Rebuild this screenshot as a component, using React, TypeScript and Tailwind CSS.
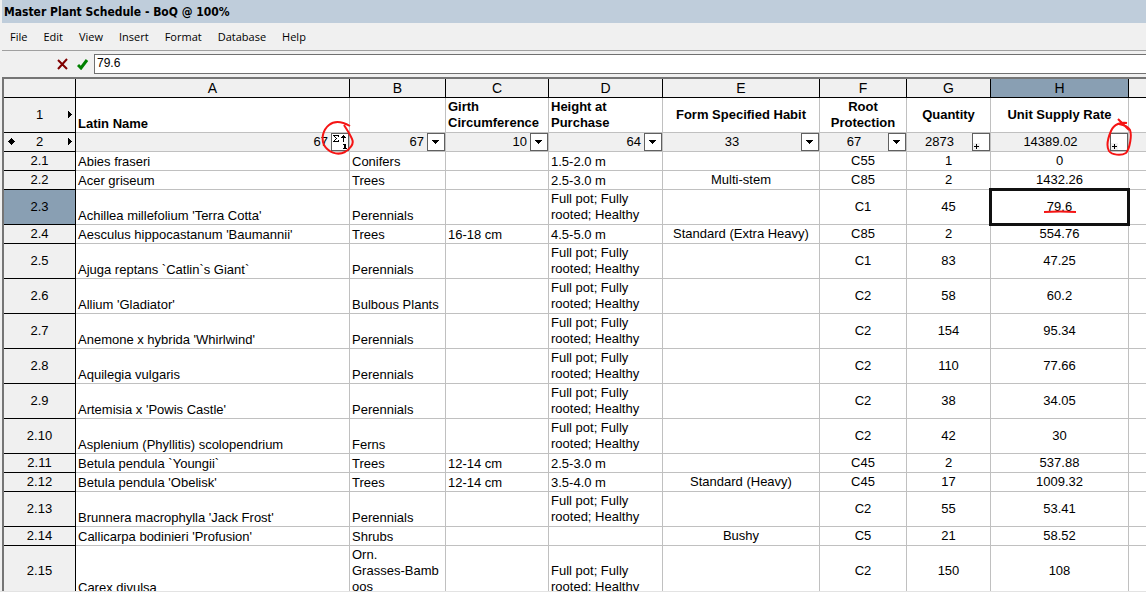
type Align = "left" | "center";

type Column = {
  letter: string;
  width: string;
  title: string;
  total: string;
  control: "sort" | "menu" | "sum";
  align: Align;
};

type Row = {
  id: string;
  size: string;
  cells: string[];
};

const SMALL = "h-[19px]";
const TALL = "h-[35px]";
const GRADE = "Full pot; Fully\nrooted; Healthy";

const MENUS = ["File", "Edit", "View", "Insert", "Format", "Database", "Help"];

const COLUMNS: Column[] = [
  { letter: "A", width: "w-[274px]", title: "Latin Name", total: "67", control: "sort", align: "left" },
  { letter: "B", width: "w-[96px]", title: "", total: "67", control: "menu", align: "left" },
  { letter: "C", width: "w-[103px]", title: "Girth\nCircumference", total: "10", control: "menu", align: "left" },
  { letter: "D", width: "w-[114px]", title: "Height at\nPurchase", total: "64", control: "menu", align: "left" },
  { letter: "E", width: "w-[157px]", title: "Form Specified Habit", total: "33", control: "menu", align: "center" },
  { letter: "F", width: "w-[87px]", title: "Root\nProtection", total: "67", control: "menu", align: "center" },
  { letter: "G", width: "w-[84px]", title: "Quantity", total: "2873", control: "sum", align: "center" },
  { letter: "H", width: "w-[138px]", title: "Unit Supply Rate", total: "14389.02", control: "sum", align: "center" },
];

const ROWS: Row[] = [
  { id: "2.1", size: SMALL, cells: ["Abies fraseri", "Conifers", "", "1.5-2.0 m", "", "C55", "1", "0"] },
  { id: "2.2", size: SMALL, cells: ["Acer griseum", "Trees", "", "2.5-3.0 m", "Multi-stem", "C85", "2", "1432.26"] },
  { id: "2.3", size: TALL, cells: ["Achillea millefolium 'Terra Cotta'", "Perennials", "", GRADE, "", "C1", "45", "79.6"] },
  { id: "2.4", size: SMALL, cells: ["Aesculus hippocastanum 'Baumannii'", "Trees", "16-18 cm", "4.5-5.0 m", "Standard (Extra Heavy)", "C85", "2", "554.76"] },
  { id: "2.5", size: TALL, cells: ["Ajuga reptans `Catlin`s Giant`", "Perennials", "", GRADE, "", "C1", "83", "47.25"] },
  { id: "2.6", size: TALL, cells: ["Allium 'Gladiator'", "Bulbous Plants", "", GRADE, "", "C2", "58", "60.2"] },
  { id: "2.7", size: TALL, cells: ["Anemone x hybrida 'Whirlwind'", "Perennials", "", GRADE, "", "C2", "154", "95.34"] },
  { id: "2.8", size: TALL, cells: ["Aquilegia vulgaris", "Perennials", "", GRADE, "", "C2", "110", "77.66"] },
  { id: "2.9", size: TALL, cells: ["Artemisia x 'Powis Castle'", "Perennials", "", GRADE, "", "C2", "38", "34.05"] },
  { id: "2.10", size: TALL, cells: ["Asplenium (Phyllitis) scolopendrium", "Ferns", "", GRADE, "", "C2", "42", "30"] },
  { id: "2.11", size: SMALL, cells: ["Betula pendula `Youngii`", "Trees", "12-14 cm", "2.5-3.0 m", "", "C45", "2", "537.88"] },
  { id: "2.12", size: SMALL, cells: ["Betula pendula 'Obelisk'", "Trees", "12-14 cm", "3.5-4.0 m", "Standard (Heavy)", "C45", "17", "1009.32"] },
  { id: "2.13", size: TALL, cells: ["Brunnera macrophylla 'Jack Frost'", "Perennials", "", GRADE, "", "C2", "55", "53.41"] },
  { id: "2.14", size: SMALL, cells: ["Callicarpa bodinieri 'Profusion'", "Shrubs", "", "", "Bushy", "C5", "21", "58.52"] },
  { id: "2.15", size: "h-[51px]", cells: ["Carex divulsa", "Orn.\nGrasses-Bamb\noos", "", GRADE, "", "C2", "150", "108"] },
];

const ACTIVE_ROW = "2.3";
const ACTIVE_COLUMN = "H";

function cellLayout(align: Align, text: string) {
  const side = align === "left" ? "px-[2px] text-left align-bottom" : "px-0 text-center align-middle";
  return `${side} ${text.includes("\n") ? "pt-0 pb-px" : "py-0"}`;
}

function ControlIcon({ control }: { control: Column["control"] }) {
  return (
    <svg width="16" height="16" viewBox="0 0 16 16" shapeRendering="crispEdges" aria-hidden="true">
      {control === "menu" && <path d="M4 6h7v1H4zM5 7h5v1H5zM6 8h3v1H6zM7 9h1v1H7z" />}
      {control === "sum" && (
        <>
          <path d="M0 9h7v7H0z" fill="#f0f0f0" />
          <path d="M3 10h1v2h2v1H4v2H3v-2H1v-1h2z" />
        </>
      )}
      {control === "sort" && (
        <>
          <path d="M1 1h6v2H6V2H3v1h1v1h1v1H4v1H3v1h3V6h1v2H1V7h1V6h1V5h1V4H3V3H2V2H1z" />
          <path d="M11 1h1v1h1v1h1v1h-2v4h-1V4H9V3h1V2h1z" />
          <path d="M13 10h1v4h1v1h-4v-1h1v-3h-1v-1h1z" />
        </>
      )}
    </svg>
  );
}

function MarkArrow() {
  return (
    <svg className="absolute top-1/2 right-[2px] -mt-1" width="5" height="7" viewBox="0 0 5 7" shapeRendering="crispEdges" aria-hidden="true">
      <path d="M0 0h1v1h1v1h1v1h1v1H3v1H2v1H1v1H0z" />
    </svg>
  );
}

// red pen circle round the sort button
function SortCircle() {
  return (
    <svg className="pointer-events-none absolute -top-[14px] -right-[6px]" width="34" height="40" viewBox="0 0 34 40" fill="none" aria-hidden="true">
      <path
        d="M29 7C22 3 14 1 8 6C2 11 0 19 3 26C7 33 16 37 24 33C30 29 33 24 31 20C29 15 26 11 23 6"
        stroke="#f51414"
        strokeWidth="2"
      />
    </svg>
  );
}

function SumCircle() {
  return (
    <svg className="pointer-events-none absolute -top-[15px] -right-[4px]" width="26" height="40" viewBox="0 0 26 40" fill="none" aria-hidden="true">
      <path
        d="M12 1L23 12M21 5C15 4 8 6 5 13C2 20 0 28 3 33C6 37 15 38 20 35C24 30 26 17 24 12C22 8 18 7 13 6"
        stroke="#f51414"
        strokeWidth="2"
      />
    </svg>
  );
}

export default function App() {
  return (
    <main className="flex h-screen flex-col overflow-hidden bg-[#f0f0f0] pl-[2px] text-black">
      <h1 className="h-[23px] shrink-0 bg-[#bfcddb] pl-[2px] font-['DejaVu_Sans_Condensed','DejaVu_Sans',sans-serif] text-[12px] leading-6 font-bold">
        Master Plant Schedule - BoQ @ 100%
      </h1>

      <nav className="flex h-[27px] shrink-0 items-center gap-4 pl-2 font-['Open_Sans',sans-serif] text-[11px] leading-4">
        {MENUS.map((menu) => (
          <button key={menu} type="button">
            {menu}
          </button>
        ))}
      </nav>

      {/* Formula bar */}
      <div className="flex h-[27px] shrink-0 items-center gap-2 border-t border-[#a0a0a0] pl-[55px]">
        <button type="button" aria-label="Cancel">
          <svg width="12" height="12" viewBox="0 0 12 12" fill="none" stroke="#800000" strokeWidth="2" aria-hidden="true">
            <path d="M1 2L10 11M10 1L1 11" />
          </svg>
        </button>
        <div className="flex min-w-0 flex-1 items-center gap-1">
          <button type="button" aria-label="Accept">
            <svg width="13" height="12" viewBox="0 0 13 12" fill="none" stroke="#008000" strokeWidth="2" aria-hidden="true">
              <path d="M1 7L4 10L10 2" strokeWidth="3" />
            </svg>
          </button>
          <input
            aria-label="Cell value"
            defaultValue="79.6"
            className="h-5 min-w-0 flex-1 border border-r-0 border-[#707070] bg-white px-[2px] pb-[2px] font-['Liberation_Sans',Arial,sans-serif] text-[12px] outline-none"
          />
        </div>
      </div>

      {/* Grid */}
      <div className="min-h-0 flex-1 overflow-hidden border-t-2 border-l-2 border-[#757575] bg-white">
        <table className="w-full min-w-[1142px] table-fixed border-separate border-spacing-0 font-['Liberation_Sans',Arial,sans-serif] text-[13px] leading-4">
          <colgroup>
            <col className="w-[72px]" />
            {COLUMNS.map((column) => (
              <col key={column.letter} className={column.width} />
            ))}
            <col />
          </colgroup>
          <thead>
            <tr className="h-[19px] bg-[#f0f0f0]">
              <td className="border-r border-b border-black p-0" />
              {COLUMNS.map((column) => (
                <th
                  key={column.letter}
                  scope="col"
                  className={`border-r border-b border-black p-0 text-[14px] font-normal ${
                    column.letter === ACTIVE_COLUMN ? "bg-[#899fb3]" : ""
                  }`}
                >
                  {column.letter}
                </th>
              ))}
              <td className="border-b border-black p-0" />
            </tr>
          </thead>
          <tbody>
            <tr className="h-[35px]">
              <th scope="row" className="relative border-r border-b border-black bg-[#f0f0f0] p-0 font-normal">
                1
                <MarkArrow />
              </th>
              {COLUMNS.map((column) => (
                <th
                  key={column.letter}
                  className={`border-r border-b border-[#c0c0c0] font-bold whitespace-pre-line ${cellLayout(column.align, column.title)}`}
                >
                  {column.title}
                </th>
              ))}
              <td className="border-b border-[#c0c0c0] p-0" />
            </tr>

            {/* Totals */}
            <tr className="h-[19px] bg-[#f0f0f0]">
              <th scope="row" className="relative border-r border-b border-black p-0 font-normal">
                <svg className="absolute top-[5px] left-1" width="7" height="7" viewBox="0 0 7 7" shapeRendering="crispEdges" aria-hidden="true">
                  <path d="M3 0h1v1h1v1h1v1h1v1H6v1H5v1H4v1H3V6H2V5H1V4H0V3h1V2h1V1h1z" />
                </svg>
                2
                <MarkArrow />
              </th>
              {COLUMNS.map((column) => (
                <td key={column.letter} className="relative border-r border-b border-[#c0c0c0] p-0">
                  <div className="flex h-[18px] items-center">
                    <span className={`flex-1 ${column.align === "left" ? "pr-[3px] text-right" : "text-center"}`}>
                      {column.total}
                    </span>
                    <button
                      type="button"
                      aria-label={`Column ${column.letter} options`}
                      className="h-[18px] w-[18px] border border-[#606060] bg-white"
                    >
                      <ControlIcon control={column.control} />
                    </button>
                  </div>
                  {column.letter === "A" && <SortCircle />}
                  {column.letter === "H" && <SumCircle />}
                </td>
              ))}
              <td className="border-b border-[#c0c0c0] p-0" />
            </tr>

            {ROWS.map((row) => (
              <tr key={row.id} className={row.size}>
                <th
                  scope="row"
                  className={`border-r border-b border-black p-0 font-normal ${
                    row.id === ACTIVE_ROW ? "bg-[#899fb3]" : "bg-[#f0f0f0]"
                  }`}
                >
                  {row.id}
                </th>
                {COLUMNS.map((column, i) => {
                  const active = row.id === ACTIVE_ROW && column.letter === ACTIVE_COLUMN;
                  return (
                    <td
                      key={column.letter}
                      className={`border-r border-b border-[#c0c0c0] whitespace-pre-line ${cellLayout(column.align, row.cells[i])} ${
                        active ? "relative" : ""
                      }`}
                    >
                      {row.cells[i]}
                      {active && (
                        <>
                          <span className="pointer-events-none absolute -inset-[2px] border-[3px] border-[#111111]" />
                          <svg className="absolute bottom-[11px] left-[53px]" width="32" height="3" viewBox="0 0 32 3" aria-hidden="true">
                            <path d="M0 2Q16 1 32 2" fill="none" stroke="#f51414" strokeWidth="2" />
                          </svg>
                        </>
                      )}
                    </td>
                  );
                })}
                <td className="border-b border-[#c0c0c0] p-0" />
              </tr>
            ))}
          </tbody>
        </table>
      </div>
      <div className="-ml-[2px] h-[2px] shrink-0 border-t border-[#e3e3e3] bg-white" />
    </main>
  );
}
